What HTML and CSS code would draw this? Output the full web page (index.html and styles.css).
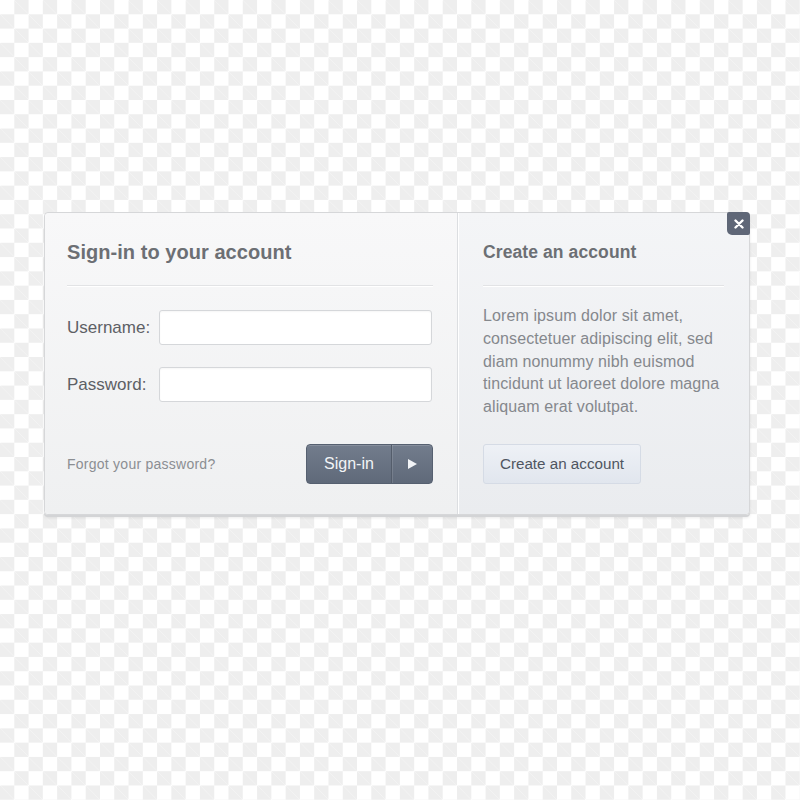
FILE: index.html
```html
<!DOCTYPE html>
<html>
<head>
<meta charset="utf-8">
<link rel="stylesheet" href="styles.css">
</head>
<body>
<div class="stage">
  <div class="card">
    <div class="panel left">
      <h1 class="title">Sign-in to your account</h1>
      <div class="rule"></div>
      <div class="field">
        <label class="label">Username:</label>
        <div class="input"></div>
      </div>
      <div class="field">
        <label class="label">Password:</label>
        <div class="input"></div>
      </div>
      <div class="actions">
        <span class="forgot">Forgot your password?</span>
        <div class="signin">
          <span class="signin-text">Sign-in</span>
          <span class="signin-arrow"><svg width="9" height="10" viewBox="0 0 9 10"><path d="M0 0 L9 5 L0 10 Z" fill="#f2f4f7"/></svg></span>
        </div>
      </div>
    </div>
    <div class="panel right">
      <h2 class="title small">Create an account</h2>
      <div class="rule"></div>
      <p class="lorem">Lorem ipsum dolor sit amet, consectetuer adipiscing elit, sed diam nonummy nibh euismod tincidunt ut laoreet dolore magna aliquam erat volutpat.</p>
      <div class="create">Create an account</div>
    </div>
    <div class="close"><svg width="10" height="10" viewBox="0 0 10 10"><path d="M1.5 1.5 L8.5 8.5 M8.5 1.5 L1.5 8.5" stroke="#ffffff" stroke-width="2.4" stroke-linecap="round"/></svg></div>
  </div>
</div>
</body>
</html>
```
FILE: styles.css
```css
html, body {
  margin: 0;
  padding: 0;
  width: 800px;
  height: 800px;
  overflow: hidden;
}
body {
  font-family: "Liberation Sans", Arial, sans-serif;
  background-color: #ffffff;
  background-image:
    linear-gradient(45deg, #eeeeee 25%, transparent 25%, transparent 75%, #eeeeee 75%),
    linear-gradient(45deg, #eeeeee 25%, transparent 25%, transparent 75%, #eeeeee 75%);
  background-size: 28.57px 28.57px;
  background-position: 0 0, 14.285px 14.285px;
}
.stage {
  padding: 212px 0 0 44px;
}
.card {
  position: relative;
  width: 706px;
  height: 303px;
  display: flex;
  box-sizing: border-box;
  border: 1px solid #d6d7d9;
  border-radius: 4px;
  box-shadow: 0 2px 0 #d3d4d6, 0 3px 3px rgba(0,0,0,0.08);
  overflow: visible;
}
.panel {
  box-sizing: border-box;
  height: 100%;
}
.left {
  width: 413px;
  padding: 26px 24px 0 22px;
  background: linear-gradient(#f8f8f9, #eff0f1);
  border-radius: 4px 0 0 4px;
  border-right: 1px solid #dcdee1;
}
.right {
  flex: 1;
  padding: 26px 25px 0 25px;
  background: linear-gradient(#f4f5f7, #eaecef);
  border-radius: 0 4px 4px 0;
  box-shadow: inset 1px 0 0 #ffffff;
}
.title {
  margin: 0;
  font-size: 20px;
  line-height: 26px;
  font-weight: bold;
  color: #6c6f74;
  letter-spacing: 0.05px;
}
.title.small {
  font-size: 17.5px;
  letter-spacing: 0.1px;
}
.rule {
  margin-top: 20px;
  height: 1px;
  background: #e2e3e5;
  border-bottom: 1px solid #ffffff;
}
.field {
  display: flex;
  align-items: center;
  margin-top: 23px;
}
.field + .field {
  margin-top: 22px;
}
.label {
  width: 92px;
  font-size: 17px;
  color: #5d6065;
}
.input {
  flex: 1;
  height: 35px;
  margin-right: 1px;
  box-sizing: border-box;
  background: #ffffff;
  border: 1px solid #d5d7da;
  border-radius: 3px;
  box-shadow: inset 0 1px 2px rgba(0,0,0,0.04);
}
.actions {
  display: flex;
  align-items: center;
  justify-content: space-between;
  margin-top: 42px;
}
.forgot {
  font-size: 14px;
  letter-spacing: 0.25px;
  color: #8b8e92;
}
.signin {
  display: flex;
  width: 127px;
  height: 40px;
  box-sizing: border-box;
  border: 1px solid #566070;
  border-radius: 4px;
  background: linear-gradient(#727c8c, #5f6979);
  color: #f2f4f7;
  box-shadow: inset 0 1px 0 rgba(255,255,255,0.15);
}
.signin-text {
  width: 84px;
  display: flex;
  align-items: center;
  justify-content: center;
  font-size: 16px;
  border-right: 1px solid #545d6b;
}
.signin-arrow {
  flex: 1;
  display: flex;
  align-items: center;
  justify-content: center;
  box-shadow: inset 1px 0 0 rgba(255,255,255,0.12);
}
.lorem {
  margin: 18px 0 0;
  font-size: 16px;
  line-height: 22.8px;
  letter-spacing: 0.1px;
  color: #85888d;
}
.create {
  margin-top: 25px;
  width: 158px;
  height: 40px;
  box-sizing: border-box;
  display: flex;
  align-items: center;
  justify-content: center;
  font-size: 15.2px;
  color: #4f5661;
  background: linear-gradient(#eef1f6, #e1e6ee);
  border: 1px solid #d5dbe5;
  border-radius: 3px;
}
.close {
  position: absolute;
  top: -1px;
  right: -1px;
  width: 23px;
  height: 23px;
  display: flex;
  align-items: center;
  justify-content: center;
  background: #5f6777;
  border-radius: 2px 4px 2px 5px;
}
```
